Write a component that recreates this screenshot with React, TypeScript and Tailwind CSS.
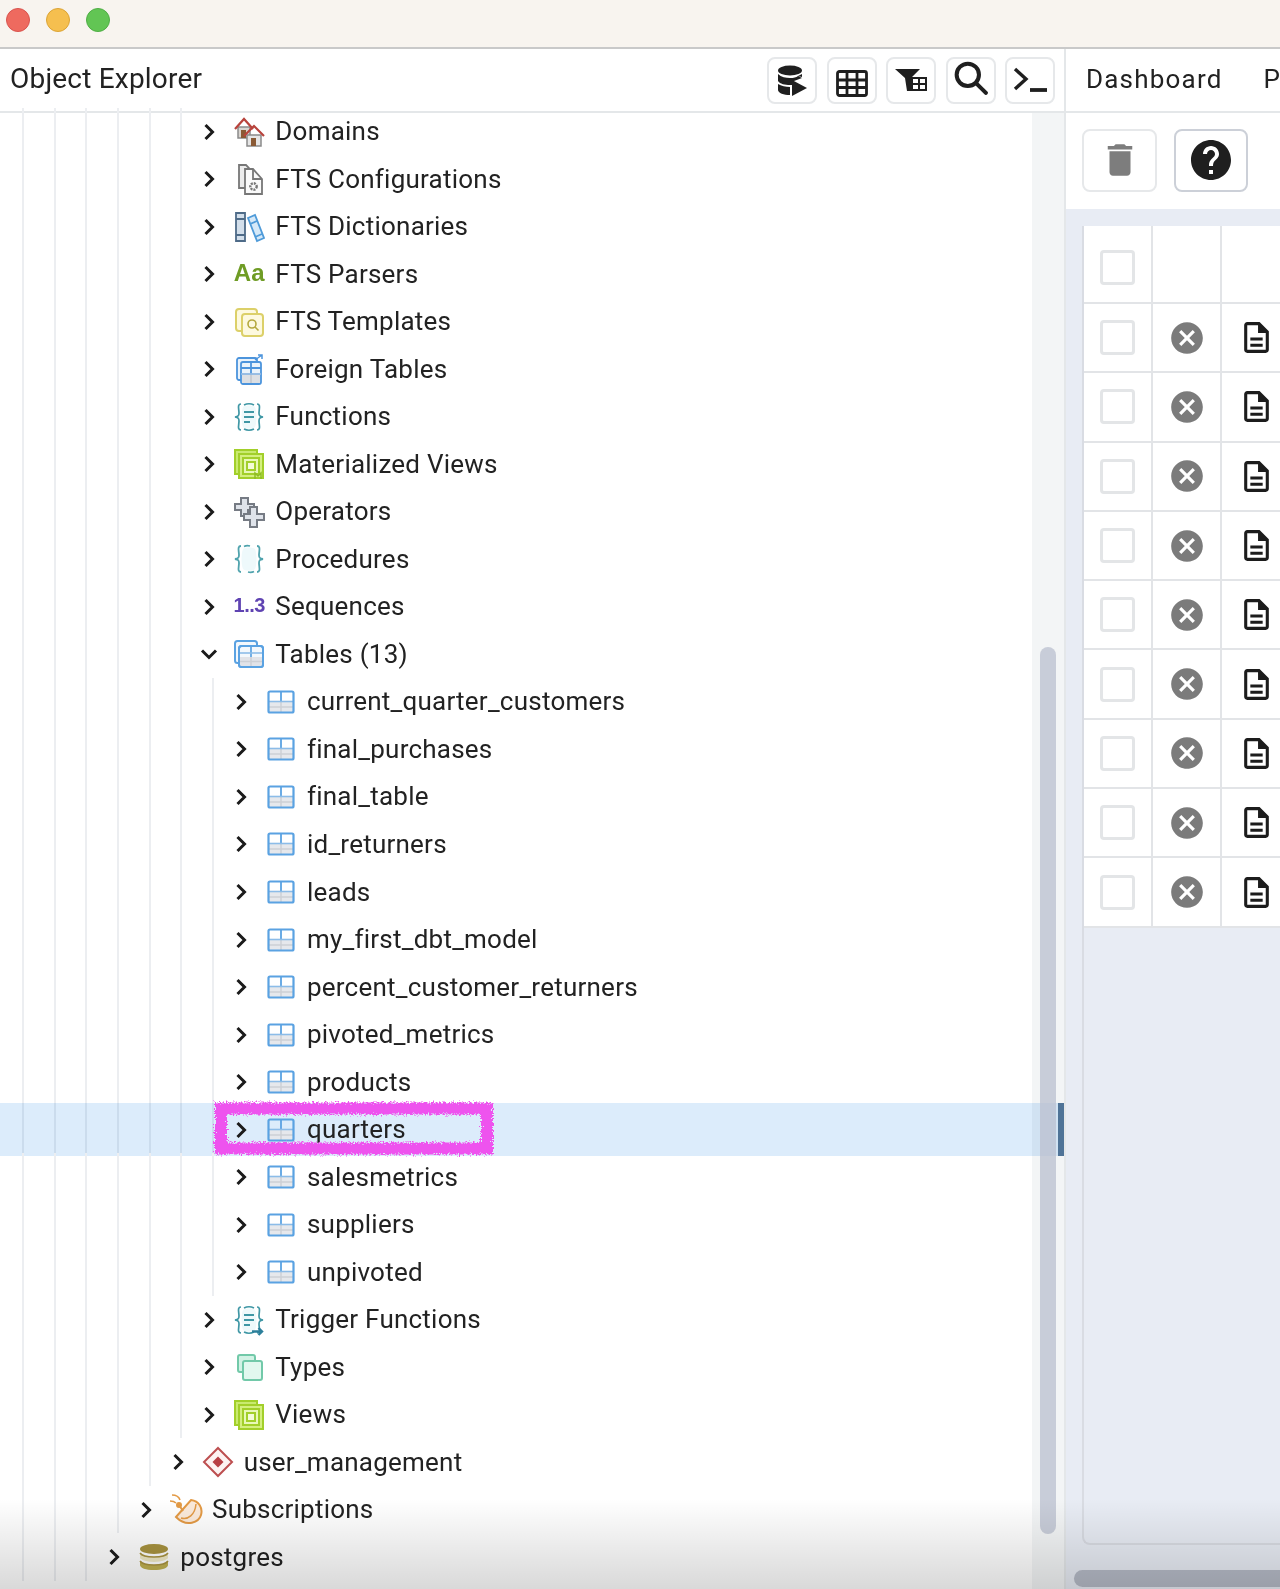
import React from 'react';
import { MdCancel, MdDelete, MdHelp, MdOutlineDescription } from 'react-icons/md';

const svg32 = 'h-8 w-8 shrink-0';

function DomainsIcon() {
  return (
    <svg viewBox="0 0 32 32" className={svg32} fill="none">
      <path d="M5 11h12v11H5z" fill="#d9d5d0" stroke="#8a8a8a" strokeWidth="1.500" />
      <path d="M8 14h5v8H8z" fill="#8a5a35" />
      <path d="M2 13 11 3l9 10" stroke="#b8433c" strokeWidth="2.200" />
      <path d="M14 19h14v11H14z" fill="#e6e6e6" stroke="#8a8a8a" strokeWidth="1.500" />
      <path d="M18 22h5v8h-5z" fill="#8a5a35" />
      <path d="M11 20l10-10 10 10" stroke="#b8433c" strokeWidth="2.200" />
    </svg>
  );
}

function ConfigIcon() {
  return (
    <svg viewBox="0 0 32 32" className={svg32} fill="none" stroke="#777777" strokeWidth="1.800">
      <path d="M6 2h7l3 3v20H6z" fill="#ececec" />
      <path d="M12 6h8l9 10v15H12z" fill="#fafafa" />
      <path d="M20 6v10h9" />
      <circle cx="20.500" cy="23.500" r="3.200" strokeWidth="2.400" strokeDasharray="2 1" />
    </svg>
  );
}

function DictIcon() {
  return (
    <svg viewBox="0 0 32 32" className={svg32} fill="none" strokeWidth="1.800">
      <path d="M3 2h9v28H3z" fill="#d3dfeb" stroke="#4e6b88" />
      <path d="M3 8h9M3 24h9" stroke="#4e6b88" />
      <path d="m15 7 7-3 9 23-7 3z" fill="#d6e9f8" stroke="#4f9bd9" />
      <path d="m17 13 7-3M22 26l7-3" stroke="#4f9bd9" />
    </svg>
  );
}

function TemplatesIcon() {
  return (
    <svg viewBox="0 0 32 32" className={svg32} fill="none" stroke="#dcd069" strokeWidth="2">
      <rect x="3" y="3" width="21" height="22" rx="3" fill="#fdf9df" />
      <rect x="9" y="8" width="21" height="22" rx="3" fill="#fdf9df" />
      <circle cx="19" cy="18" r="4" stroke="#b4a83e" strokeWidth="1.600" />
      <path d="m22 21 3.500 3.500" stroke="#b4a83e" strokeWidth="1.600" />
    </svg>
  );
}

function ForeignIcon() {
  return (
    <svg viewBox="0 0 32 32" className={svg32} fill="none" stroke="#4c94dc" strokeWidth="1.800">
      <rect x="4" y="5" width="20" height="22" rx="2" fill="#eaf3fb" />
      <rect x="8" y="9" width="20" height="22" rx="2" fill="#eaf3fb" />
      <path d="M9 21h18v9H9z" fill="#dcdfe3" stroke="none" />
      <path d="M18 9v12M8 15h20" />
      <path d="M18 21v9" stroke="#c6cad0" />
      <path d="M8 21h20" stroke="#8fb8e2" />
      <path d="m22 7 7-5M25 2h4v4" strokeWidth="1.500" />
    </svg>
  );
}

function FuncIcon({ arrow = false }: { arrow?: boolean }) {
  return (
    <svg viewBox="0 0 32 32" className={svg32} fill="none" stroke="#3f97a5" strokeWidth="1.700">
      <path d="M8 3C4 3 6 8 6 12c0 3-1 3.500-4 4 3 .5 4 1 4 4 0 4-2 9 2 9" />
      <path d="M24 3c4 0 2 5 2 9 0 3 1 3.500 4 4-3 .5-4 1-4 4 0 4 2 9-2 9" />
      <path d="M10 6c2-2 10-2 12 0 2 5 2 15 0 20-2 2-10 2-12 0-2-5-2-15 0-20z" fill="#eef9fb" stroke="none" />
      <path d="M11 4c3-1.500 7-1.500 10 0M11 28c3 1.500 7 1.500 10 0" />
      <path d="M11 11h10M11 16h10M11 21h6" strokeWidth="2" />
      {arrow && <path d="M19 27.500h10m-3.500-3.500 3.500 3.500-3.500 3.500" stroke="#2c7f9b" strokeWidth="2.400" />}
    </svg>
  );
}

function ProcIcon() {
  return (
    <svg viewBox="0 0 32 32" className={svg32} fill="none" stroke="#4fa3ad" strokeWidth="1.800">
      <path d="M10 6c2-2 10-2 12 0 2 5 2 15 0 20-2 2-10 2-12 0-2-5-2-15 0-20z" fill="#eef9fb" stroke="none" />
      <path d="M8 3C4 3 6 8 6 12c0 3-1 3.500-4 4 3 .5 4 1 4 4 0 4-2 9 2 9" />
      <path d="M24 3c4 0 2 5 2 9 0 3 1 3.500 4 4-3 .5-4 1-4 4 0 4 2 9-2 9" />
      <path d="M11 3.500c2-1 4-1 6-.5M15 29c2 .5 4 .5 6-.5" />
    </svg>
  );
}

function ViewsIcon({ mat = false }: { mat?: boolean }) {
  return (
    <svg viewBox="0 0 32 32" className={svg32} fill="none" stroke="#a2cf2a" strokeWidth="2">
      <rect x="2" y="2" width="22" height="24" fill="#c9ea6f" />
      <rect x="6" y="6" width="24" height="24" fill="#d4ef7f" />
      <rect x="10" y="10" width="16" height="16" fill="#e8f8b8" />
      <rect x="14" y="14" width="8" height="8" fill="#f3fbd8" />
      {mat && <path d="M22 31V25l3 3 3-3v6" strokeWidth="1.500" stroke="#8fbd24" />}
    </svg>
  );
}

function OperatorsIcon() {
  return (
    <svg viewBox="0 0 32 32" className={svg32} fill="#dfe3ea" stroke="#767b84" strokeWidth="2">
      <path d="M8 2h7v6h6v6h-6v6H8v-6H2V8h6z" />
      <path d="M17 11h7v7h7v6h-7v7h-7v-7h-6v-6h6z" />
    </svg>
  );
}

function TableIcon() {
  return (
    <svg viewBox="0 0 28 24" className="h-6 w-[28px] shrink-0" fill="none" stroke="#5aa2e2" strokeWidth="2.200">
      <path d="M2 12h24v9a1 1 0 0 1-1 1H3a1 1 0 0 1-1-1z" fill="#e6e8ec" stroke="none" />
      <path d="M14 12v10M2 17h24" stroke="#cdd0d5" strokeWidth="1.500" />
      <path d="M14 2v10" strokeWidth="1.800" />
      <path d="M2 11.500h24" stroke="#8cbce8" strokeWidth="1.600" />
      <rect x="1.500" y="1.500" width="25" height="21" rx="1.500" />
    </svg>
  );
}

function TablesIcon() {
  return (
    <svg viewBox="0 0 32 32" className={svg32} fill="none" stroke="#5aa2e2" strokeWidth="2">
      <rect x="2" y="3" width="22" height="22" rx="2.500" fill="#f3f8fd" />
      <rect x="6" y="8" width="24" height="21" rx="2.500" fill="#f3f8fd" />
      <path d="M7 19h22v8a1 1 0 0 1-1 1H8a1 1 0 0 1-1-1z" fill="#e1e3e8" stroke="none" />
      <path d="M18 8v11" strokeWidth="1.700" />
      <path d="M6 15h24" stroke="#8cbce8" strokeWidth="1.600" />
      <path d="M7 23.500h22M18 19v9" stroke="#cdd0d5" strokeWidth="1.500" />
      <rect x="6" y="8" width="24" height="21" rx="2.500" />
    </svg>
  );
}

function TypesIcon() {
  return (
    <svg viewBox="0 0 32 32" className={svg32} fill="none" stroke="#72c9a9" strokeWidth="2">
      <rect x="5" y="4" width="17" height="17" rx="2" fill="#d2f2e5" />
      <rect x="10" y="10" width="19" height="19" rx="2" fill="#e2f8ef" />
    </svg>
  );
}

function DiamondIcon() {
  return (
    <svg viewBox="0 0 32 32" className={svg32} fill="#fdf3f2">
      <path d="M16 2 30 16 16 30 2 16z" stroke="#bd4f50" strokeWidth="2" />
      <path d="m16 10.500 5.500 5.500-5.500 5.500-5.500-5.500z" fill="#b83f44" />
    </svg>
  );
}

function SubscriptionIcon() {
  return (
    <svg viewBox="0 0 36 36" className="-mr-[1px] -ml-[3px] h-9 w-9 shrink-0" fill="none" stroke="#e39a45" strokeWidth="2">
      <path d="M9 25 24 8c8 1 12 8 10 15-2 7-14 13-25 2z" fill="#fbeadb" />
      <path d="M14 26c7 2 14-3 15-14" strokeWidth="1.500" />
      <path d="M16 19 12 13" />
      <circle cx="12" cy="13" r="2" fill="#e39a45" />
      <path d="M3 9c3 0 5 1 6 2M5 3c4 0 7 2 8 5" strokeWidth="1.600" />
    </svg>
  );
}

function DbIcon() {
  return (
    <svg viewBox="0 0 32 28" className="h-7 w-8 shrink-0">
      <ellipse cx="16" cy="6" rx="14" ry="5" fill="#a8933f" />
      <path d="M2 10c2 3 7 4 14 4s12-1 14-4v5c0 1-6 4-14 4S2 16 2 15z" fill="#efe9c5" />
      <path d="M2 18c2 3 7 4 14 4s12-1 14-4v4c0 3-6 5-14 5S2 25 2 22z" fill="#bfb050" />
      <path d="M2 10c2 3 7 4 14 4s12-1 14-4M2 18c2 3 7 4 14 4s12-1 14-4" stroke="#a8933f" strokeWidth="1.500" fill="none" />
    </svg>
  );
}

function Chevron({ open }: { open?: boolean }) {
  return open ? (
    <svg viewBox="0 0 18 12" className="h-3 w-[18px]" fill="none" stroke="#1b1b1b" strokeWidth="3">
      <path d="M2 2.500 9 9.500l7-7" />
    </svg>
  ) : (
    <svg viewBox="0 0 12 18" className="h-[18px] w-3" fill="none" stroke="#1b1b1b" strokeWidth="3">
      <path d="M2.500 2 9.500 9l-7 7" />
    </svg>
  );
}

type Item = { label: string; depth: number; icon: React.ReactNode; open?: boolean; selected?: boolean };

const tableNames = [
  'current_quarter_customers',
  'final_purchases',
  'final_table',
  'id_returners',
  'leads',
  'my_first_dbt_model',
  'percent_customer_returners',
  'pivoted_metrics',
  'products',
  'quarters',
  'salesmetrics',
  'suppliers',
  'unpivoted',
];

const ITEMS: Item[] = [
  { label: 'Domains', depth: 6, icon: <DomainsIcon /> },
  { label: 'FTS Configurations', depth: 6, icon: <ConfigIcon /> },
  { label: 'FTS Dictionaries', depth: 6, icon: <DictIcon /> },
  {
    label: 'FTS Parsers',
    depth: 6,
    icon: <span className="-mt-[3px] w-8 shrink-0 text-center font-['Liberation_Sans'] text-[24px] font-bold text-[#6f9c25]">Aa</span>,
  },
  { label: 'FTS Templates', depth: 6, icon: <TemplatesIcon /> },
  { label: 'Foreign Tables', depth: 6, icon: <ForeignIcon /> },
  { label: 'Functions', depth: 6, icon: <FuncIcon /> },
  { label: 'Materialized Views', depth: 6, icon: <ViewsIcon mat /> },
  { label: 'Operators', depth: 6, icon: <OperatorsIcon /> },
  { label: 'Procedures', depth: 6, icon: <ProcIcon /> },
  {
    label: 'Sequences',
    depth: 6,
    icon: <span className="-mt-[3px] w-8 shrink-0 text-center font-['Liberation_Sans'] text-[20px] font-bold tracking-tight text-[#5f43b2]">1..3</span>,
  },
  { label: 'Tables (13)', depth: 6, icon: <TablesIcon />, open: true },
  ...tableNames.map((label) => ({
    label,
    depth: 7,
    selected: label === 'quarters',
    icon: (
      <span className="flex w-8 shrink-0 justify-center">
        <TableIcon />
      </span>
    ),
  })),
  { label: 'Trigger Functions', depth: 6, icon: <FuncIcon arrow /> },
  { label: 'Types', depth: 6, icon: <TypesIcon /> },
  { label: 'Views', depth: 6, icon: <ViewsIcon /> },
  { label: 'user_management', depth: 5, icon: <DiamondIcon /> },
  { label: 'Subscriptions', depth: 4, icon: <SubscriptionIcon /> },
  { label: 'postgres', depth: 3, icon: <DbIcon /> },
];

function TreeRow({ item }: { item: Item }) {
  const guides = Array.from({ length: item.depth - 1 });
  return (
    <div className="relative flex h-[47.53px] shrink-0 items-stretch pl-[22px]">
      {item.selected && (
        <>
          <div className="absolute -top-[3px] -bottom-[3px] left-0 w-[1063px] bg-[#dcecfb] mix-blend-multiply" />
          <div className="absolute -top-[3px] -bottom-[3px] left-[1058px] w-[6px] bg-[#4f7397]" />
        </>
      )}
      {guides.map((_, i) => (
        <div key={i} className="w-[31.67px] shrink-0 border-l-2 border-[#eceef1]" />
      ))}
      <div className="w-[10px] shrink-0 border-l-2 border-[#eceef1]" />
      <div className="relative flex w-[38px] shrink-0 items-center justify-center">
        <Chevron open={item.open} />
      </div>
      <div className="relative ml-[5px] flex items-center gap-[10px] text-[26px] tracking-[0.23px] text-[#222222]">
        {item.icon}
        <span className="whitespace-nowrap">{item.label}</span>
      </div>
    </div>
  );
}

function ToolButton({ children }: { children: React.ReactNode }) {
  return (
    <div className="flex h-[47px] w-[50px] items-center justify-center rounded-lg border-2 border-[#e6e8ea]">{children}</div>
  );
}

function Toolbar() {
  return (
    <div className="flex h-[64px] shrink-0 items-center justify-between border-b-2 border-[#e4e7e9] pl-[10px] pr-[9px]">
      <span className="-mt-[2px] text-[28px] tracking-[0.2px] text-[#222222]">Object Explorer</span>
      <div className="flex gap-[9.500px]">
        <ToolButton>
          <svg viewBox="0 0 30 31" className="h-[31px] w-[30px]" fill="#1f1f1f">
            <ellipse cx="13" cy="5.500" rx="12" ry="5" />
            <path d="M1 9c3 3 8 4 12 4s6-.5 8-2l4 2-8 3v4h-4C8 20 3 19 1 16zM21 11l4-2v3z" />
            <path d="M1 19c3 2 8 3 12 3v8C7 30 1 28 1 25z" />
            <path d="M15 15l15 8-15 8z" />
          </svg>
        </ToolButton>
        <ToolButton>
          <svg viewBox="0 0 32 27" className="mt-[6px] h-[27px] w-[32px]" fill="none" stroke="#1f1f1f" strokeWidth="2.800">
            <rect x="1.500" y="1.500" width="29" height="24" rx="2" />
            <path d="M11 3v22M21 3v22M2 10h28M2 17.500h28" />
          </svg>
        </ToolButton>
        <ToolButton>
          <svg viewBox="0 0 33 24" className="h-[24px] w-[33px]" fill="#1f1f1f">
            <path d="M0 1h25l-9 9v13h-4l-2-13z" />
            <path d="M16 9h16v14H16zm2 2v4h5v-4zm7 0v4h5v-4zm-7 6v4h5v-4zm7 0v4h5v-4z" fillRule="evenodd" />
          </svg>
        </ToolButton>
        <ToolButton>
          <svg viewBox="0 0 32 32" className="-mt-[4px] h-[34px] w-[34px]" fill="none" stroke="#1f1f1f" strokeWidth="3.800">
            <circle cx="13" cy="13" r="10.500" />
            <path d="m21 21 9 9" strokeLinecap="round" />
          </svg>
        </ToolButton>
        <ToolButton>
          <svg viewBox="0 0 36 28" className="h-[28px] w-[36px]" fill="none" stroke="#1f1f1f" strokeWidth="3.400">
            <path d="m3 3 11 10L3 23" />
            <path d="M18 24h17" strokeWidth="3.800" />
          </svg>
        </ToolButton>
      </div>
    </div>
  );
}

function GridRow({ header }: { header?: boolean }) {
  return (
    <div className={header ? 'flex h-[78px] shrink-0 border-b-2 border-[#e2e4e7]' : 'flex h-[69.3px] shrink-0 border-b-2 border-[#e2e4e7]'}>
      <div className={header ? 'flex w-[69px] shrink-0 items-center justify-center border-r-2 border-[#e2e4e7] pt-[6px]' : 'flex w-[69px] shrink-0 items-center justify-center border-r-2 border-[#e2e4e7]'}>
        <div className="h-[35px] w-[35px] rounded-[4px] border-[3px] border-[#e3e5e7] bg-white" />
      </div>
      <div className="flex w-[69px] shrink-0 items-center justify-center border-r-2 border-[#e2e4e7]">
        {!header && <MdCancel className="h-[38px] w-[38px] text-[#7b7b7b]" />}
      </div>
      <div className="flex flex-1 items-center pl-[16px]">
        {!header && <MdOutlineDescription className="h-[37px] w-[37px] text-[#1c1c1c]" />}
      </div>
    </div>
  );
}

export default function App() {
  return (
    <div className="relative flex h-[1589px] w-[1280px] flex-col overflow-hidden bg-white font-[Roboto]">
      <div className="flex h-[49px] shrink-0 items-center gap-[16px] border-b-2 border-[#c9c9c9] bg-[#f8f4ef] pb-[8px] pl-[6px]">
        <span className="h-6 w-6 rounded-full border border-[#d9534e] bg-[#ee6a5f]" />
        <span className="h-6 w-6 rounded-full border border-[#dca436] bg-[#f5bf4f]" />
        <span className="h-6 w-6 rounded-full border border-[#4fae45] bg-[#62c554]" />
      </div>

      <div className="flex min-h-0 flex-1">
        <div className="flex w-[1066px] shrink-0 flex-col border-r-2 border-[#e4e7e9]">
          <Toolbar />
          <div className="flex min-h-0 flex-1">
            <div className="flex min-w-0 flex-1 flex-col">
              <div className="-mt-[5px] flex flex-col">
                {ITEMS.map((item) => (
                  <TreeRow key={item.label} item={item} />
                ))}
              </div>
            </div>
            <div className="w-[32px] shrink-0 bg-[#f3f5f6]" />
          </div>
        </div>

        <div className="flex min-w-0 flex-1 flex-col">
          <div className="flex h-[64px] shrink-0 items-center gap-[41px] border-b-2 border-[#e4e7e9] pl-[20px] text-[26px] tracking-[1.2px] text-[#222222]">
            <span className="-mt-[2px]">Dashboard</span>
            <span className="-mt-[2px]">P</span>
          </div>
          <div className="flex h-[96px] shrink-0 items-center gap-[17px] bg-white pb-[2px] pl-[16px]">
            <div className="flex h-[63px] w-[75px] items-center justify-center rounded-lg border-2 border-[#e6e8ea]">
              <MdDelete className="h-[42px] w-[42px] text-[#7d7d7d]" />
            </div>
            <div className="flex h-[63px] w-[74px] items-center justify-center rounded-lg border-2 border-[#ccd0d8]">
              <MdHelp className="h-[48px] w-[48px] text-[#1f1f1f]" />
            </div>
          </div>
          <div className="flex min-h-0 flex-1 flex-col bg-[#e8ecf4] pl-[16px] pt-[17px]">
            <div className="flex h-[1319px] flex-col rounded-bl-lg border-b-2 border-l-2 border-[#d9dce3]">
              {Array.from({ length: 10 }).map((_, i) => (
                <div key={i} className="bg-white">
                  <GridRow header={i === 0} />
                </div>
              ))}
            </div>
            <div className="mt-[25px] -ml-[8px] h-[17px] rounded-l-full bg-[#b6bbc7]" />
          </div>
        </div>
      </div>

      {/* overlays */}
      <div className="pointer-events-none absolute top-[647px] left-[1040px] h-[887px] w-[16px] rounded-full bg-[#b9bfcf]/75" />
      <svg className="pointer-events-none absolute top-[1096px] left-[208px] h-[66px] w-[292px]" viewBox="0 0 292 66" fill="none">
        <defs>
          <filter id="scribble" x="-5%" y="-20%" width="110%" height="140%">
            <feTurbulence type="fractalNoise" baseFrequency="0.6" numOctaves="2" seed="4" />
            <feDisplacementMap in="SourceGraphic" scale="8" />
          </filter>
        </defs>
        <rect x="13" y="12.500" width="266" height="40" stroke="#ee52ee" strokeWidth="12" filter="url(#scribble)" />
      </svg>
      <div className="pointer-events-none absolute bottom-0 left-0 h-[90px] w-full bg-gradient-to-b from-transparent to-black/15" />
    </div>
  );
}
